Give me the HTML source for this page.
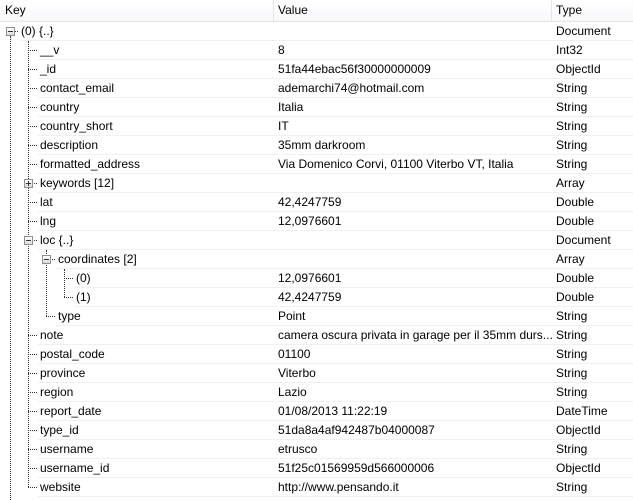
<!DOCTYPE html><html><head><style>
body{margin:0;width:633px;height:500px;overflow:hidden;background:#fff;font-family:"Liberation Sans",sans-serif;font-size:12px;color:#000;position:relative}
.h{position:absolute;left:0;top:0;width:633px;height:21px;background:linear-gradient(#fff,#f7f8fa);border-bottom:1px solid #e5e5e5}
.h span{position:absolute;top:3px}
.cd{position:absolute;top:0;height:21px;width:1px;background:#e5e5e5}
.r{position:absolute;height:18px;border-bottom:1px solid #f0f0f0;right:0}
.t{position:absolute;white-space:nowrap}
.v{position:absolute;border-left:1px dotted #333;width:0}
.hz{position:absolute;border-top:1px dotted #333;height:0}
.e{position:absolute;width:7px;height:7px;border:1px solid #8e8f8f;background:linear-gradient(#fff,#dcdcdc)}
.e:before{content:"";position:absolute;left:1px;top:3px;width:5px;height:1px;background:#333}
.e.p:after{content:"";position:absolute;left:3px;top:1px;width:1px;height:5px;background:#333}
</style></head><body>
<div class="h"><span style="left:5px">Key</span><span style="left:278px">Value</span><span style="left:556px">Type</span></div>
<div class="cd" style="left:273px"></div><div class="cd" style="left:551px"></div>
<div class="v" style="left:10px;top:36px;height:464px"></div>
<div class="v" style="left:28px;top:41px;height:446px"></div>
<div class="v" style="left:46px;top:250px;height:66px"></div>
<div class="v" style="left:64px;top:269px;height:28px"></div>
<div id="rows"></div>
<script>
var R=[[0,"(0) {..}","","Document","m"],[1,"__v","8","Int32"],[1,"_id","51fa44ebac56f30000000009","ObjectId"],[1,"contact_email","ademarchi74@hotmail.com","String"],[1,"country","Italia","String"],[1,"country_short","IT","String"],[1,"description","35mm darkroom","String"],[1,"formatted_address","Via Domenico Corvi, 01100 Viterbo VT, Italia","String"],[1,"keywords [12]","","Array","p"],[1,"lat","42,4247759","Double"],[1,"lng","12,0976601","Double"],[1,"loc {..}","","Document","m"],[2,"coordinates [2]","","Array","m"],[3,"(0)","12,0976601","Double"],[3,"(1)","42,4247759","Double"],[2,"type","Point","String"],[1,"note","camera oscura privata in garage per il 35mm durs...","String"],[1,"postal_code","01100","String"],[1,"province","Viterbo","String"],[1,"region","Lazio","String"],[1,"report_date","01/08/2013 11:22:19","DateTime"],[1,"type_id","51da8a4af942487b04000087","ObjectId"],[1,"username","etrusco","String"],[1,"username_id","51f25c01569959d566000006","ObjectId"],[1,"website","http://www.pensando.it","String"]];
var tx=[21,40,58,76],vx=[10,28,46,64],h="";
R.forEach(function(r,i){var y=22+19*i,c=y+9,x=tx[r[0]],lx=vx[r[0]];
h+='<div class="r" style="top:'+y+'px;left:'+(x-2)+'px"></div>';
h+='<div class="t" style="top:'+(y+2)+'px;left:'+x+'px">'+r[1]+'</div>';
h+='<div class="t" style="top:'+(y+2)+'px;left:278px">'+r[2]+'</div>';
h+='<div class="t" style="top:'+(y+2)+'px;left:556px">'+r[3]+'</div>';
h+='<div class="hz" style="top:'+c+'px;left:'+lx+'px;width:'+(x-lx-3)+'px"></div>';
if(r[4])h+='<div class="e '+r[4]+'" style="top:'+(c-4)+'px;left:'+(lx-4)+'px"></div>';});
document.getElementById("rows").innerHTML=h;
</script>
</body></html>
